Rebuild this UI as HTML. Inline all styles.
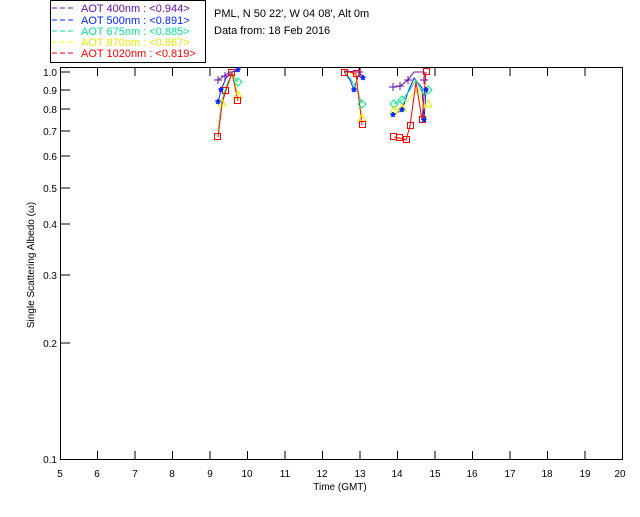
<!DOCTYPE html>
<html><head><style>
body{margin:0;background:#fff;width:640px;height:512px;overflow:hidden}
svg text{font-family:"Liberation Sans",sans-serif}
</style></head><body>
<svg width="640" height="512" xmlns="http://www.w3.org/2000/svg" font-size="11">
<rect x="50.5" y="0.5" width="155" height="62" fill="none" stroke="#000"/>
<g font-size="11">
<line x1="52" y1="8" x2="75" y2="8" stroke="#6a0fa8" stroke-dasharray="5,3"/><text x="81" y="12" fill="#6a0fa8">AOT  400nm : &lt;0.944&gt;</text>
<line x1="52" y1="20" x2="75" y2="20" stroke="#0026ff" stroke-dasharray="5,3"/><text x="81" y="24" fill="#0026ff">AOT  500nm : &lt;0.891&gt;</text>
<line x1="52" y1="31" x2="75" y2="31" stroke="#00e890" stroke-dasharray="5,3"/><text x="81" y="35" fill="#00e890">AOT  675nm : &lt;0.885&gt;</text>
<line x1="52" y1="42" x2="75" y2="42" stroke="#ffff00" stroke-dasharray="5,3"/><text x="81" y="46" fill="#e8e800">AOT  870nm : &lt;0.867&gt;</text>
<line x1="52" y1="53" x2="75" y2="53" stroke="#ff0000" stroke-dasharray="5,3"/><text x="81" y="57" fill="#ff0000">AOT 1020nm : &lt;0.819&gt;</text>
</g>
<text x="214" y="17">PML, N 50 22', W 04 08', Alt 0m</text>
<text x="214" y="34">Data from: 18 Feb 2016</text>
<rect x="60.5" y="67.5" width="562" height="392" fill="none" stroke="#000"/>
<g stroke="#000">
<path d="M97.5 459v-8M135 459v-8M172.5 459v-8M210 459v-8M247.5 459v-8M285 459v-8M322.5 459v-8M360 459v-8M397.5 459v-8M435 459v-8M472.5 459v-8M510 459v-8M547.5 459v-8M585 459v-8"/>
<path d="M97.5 68v8M135 68v8M172.5 68v8M210 68v8M247.5 68v8M285 68v8M322.5 68v8M360 68v8M397.5 68v8M435 68v8M472.5 68v8M510 68v8M547.5 68v8M585 68v8"/>
<path d="M60 72h10M60 90h10M60 109h10M60 131h10M60 156h10M60 188h10M60 224h10M60 275h10M60 343h10"/>
</g>
<g font-size="10" text-anchor="end">
<text x="57" y="76">1.0</text><text x="57" y="94">0.9</text><text x="57" y="113">0.8</text><text x="57" y="135">0.7</text><text x="57" y="160">0.6</text><text x="57" y="192">0.5</text><text x="57" y="228">0.4</text><text x="57" y="279">0.3</text><text x="57" y="347">0.2</text><text x="57" y="463">0.1</text>
</g>
<g font-size="10" text-anchor="middle">
<text x="60" y="477">5</text><text x="97" y="477">6</text><text x="135" y="477">7</text><text x="172" y="477">8</text><text x="210" y="477">9</text><text x="247" y="477">10</text><text x="285" y="477">11</text><text x="322" y="477">12</text><text x="360" y="477">13</text><text x="397" y="477">14</text><text x="435" y="477">15</text><text x="472" y="477">16</text><text x="510" y="477">17</text><text x="547" y="477">18</text><text x="585" y="477">19</text><text x="620" y="477">20</text>
<text x="340" y="490">Time (GMT)</text>
</g>
<text x="34" y="265" font-size="10" text-anchor="middle" transform="rotate(-90 34 265)">Single Scattering Albedo (ω)</text>
<g fill="none" stroke-width="1">
<polyline stroke="#6a0fa8" points="218,80 224,76 230,72 238,71"/>
<polyline stroke="#6a0fa8" points="344,71 358,72 363,76"/>
<polyline stroke="#6a0fa8" points="393,87 400,86 408,80 414,72 420,72 424,72 426,80"/>
<polyline stroke="#0026ff" points="218,103 221,90 226,78 232,72 238,70"/>
<polyline stroke="#0026ff" points="344,72 350,80 354,90 358,76 363,78"/>
<polyline stroke="#0026ff" points="393,115 402,110 408,92 414,78 422,88 424,120 426,90"/>
<polyline stroke="#00e890" points="218,130 222,100 228,82 232,74 238,82"/>
<polyline stroke="#00e890" points="344,72 350,78 356,88 362,104"/>
<polyline stroke="#00e890" points="394,104 402,100 410,90 416,80 424,96 428,90"/>
<polyline stroke="#ffff00" points="218,133 222,103 228,85 232,72 238,95"/>
<polyline stroke="#ffff00" points="344,72 350,72 356,78 362,118"/>
<polyline stroke="#ffff00" points="394,110 402,108 410,98 418,88 424,108 428,104"/>
<polyline stroke="#ff0000" points="218,137 222,104 226,90 232,73 238,101"/>
<polyline stroke="#ff0000" points="344,72 350,72 356,74 362,125"/>
<polyline stroke="#ff0000" points="394,137 399,138 406,140 410,126 416,82 422,120 426,72"/>
</g>
<g fill="none" stroke="#6a0fa8">
<path d="M214 80h8M218 76v8M221 76h8M225 72v8M355 72h8M359 68v8M389 87h8M393 83v8M396 86h8M400 82v8M404 80h8M408 76v8M420 80h8M424 76v8"/>
</g>
<g fill="none" stroke="#00e890">
<path d="M238 78l4 4-4 4-4-4zM362 100l4 4-4 4-4-4zM394 100l4 4-4 4-4-4zM402 96l4 4-4 4-4-4zM428 86l4 4-4 4-4-4z"/>
</g>
<g fill="none" stroke="#e8e800">
<path d="M238 91l4 7h-8zM362 114l4 7h-8zM394 106l4 7h-8zM402 104l4 7h-8zM428 100l4 7h-8zM222 99l4 7h-8z"/>
</g>
<g fill="none" stroke="#ff0000">
<rect x="214.5" y="133.5" width="6" height="6"/><rect x="222.5" y="87.5" width="6" height="6"/><rect x="228.5" y="69.5" width="6" height="6"/><rect x="234.5" y="97.5" width="6" height="6"/>
<rect x="341.5" y="69.5" width="6" height="6"/><rect x="353.5" y="70.5" width="6" height="6"/><rect x="359.5" y="121.5" width="6" height="6"/>
<rect x="390.5" y="133.5" width="6" height="6"/><rect x="396.5" y="134.5" width="6" height="6"/><rect x="403.5" y="136.5" width="6" height="6"/><rect x="407.5" y="122.5" width="6" height="6"/><rect x="419.5" y="116.5" width="6" height="6"/><rect x="423.5" y="68.5" width="6" height="6"/>
</g>
<g stroke="#0026ff" font-size="12" fill="#0026ff" text-anchor="middle">
<text x="218" y="108">*</text><text x="221" y="96">*</text><text x="238" y="76">*</text><text x="354" y="96">*</text><text x="363" y="84">*</text><text x="393" y="121">*</text><text x="402" y="116">*</text><text x="424" y="126">*</text><text x="426" y="96">*</text>
</g>
</svg>
</body></html>
